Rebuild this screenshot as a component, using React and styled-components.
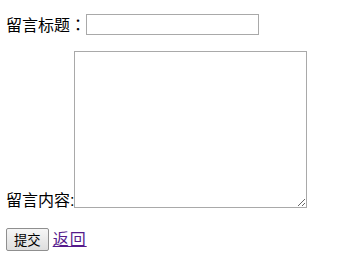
import React from 'react'
import styled, { createGlobalStyle } from 'styled-components'

const GlobalStyle = createGlobalStyle`
  body {
    margin: 0;
    background: #fff;
    color: #000;
    font-family: "Liberation Sans", "Noto Sans CJK SC", sans-serif;
    font-size: 16px;
  }
`

const Form = styled.form`
  padding: 14px 6px 0;
`

const Row = styled.div`
  display: flex;
  align-items: ${props => props.align || 'center'};
  margin-bottom: ${props => props.gap || 0}px;
`

const Label = styled.label`
  line-height: 16px;
  margin-bottom: ${props => props.drop || 0}px;
`

// full-width colon sits centred in its cell, as in the TC face
const Colon = styled.span`
  font-family: "Noto Sans CJK TC", sans-serif;
`

const TitleInput = styled.input`
  box-sizing: border-box;
  width: 173px;
  height: 21px;
  margin: 0;
  border: 1px solid #a9a9a9;
  padding: 1px 2px;
  font: inherit;
  font-size: 13px;
`

const ContentArea = styled.textarea`
  box-sizing: border-box;
  width: 233px;
  height: 157px;
  margin: 0;
  border: 1px solid #a9a9a9;
  padding: 2px;
  font: inherit;
  font-size: 13px;
`

const SubmitButton = styled.button`
  box-sizing: border-box;
  height: 23px;
  padding: 1px 7px;
  margin: 0 4px 0 0;
  border: 1px solid #8f8f8f;
  border-radius: 2px;
  background: linear-gradient(#f6f6f6, #dedede);
  font-family: "Liberation Sans", "Noto Sans CJK SC", sans-serif;
  font-size: 13.33px;
  color: #000;
`

const BackLink = styled.a`
  color: #551a8b;
  text-decoration: underline;
  line-height: 16px;
  letter-spacing: 1px;
`

export default function App() {
  return (
    <>
      <GlobalStyle />
      <Form onSubmit={e => e.preventDefault()}>
        <Row gap={16}>
          <Label>留言标题<Colon>：</Colon></Label>
          <TitleInput type="text" />
        </Row>
        <Row align="flex-end" gap={20}>
          <Label drop={-1}>留言内容:</Label>
          <ContentArea />
        </Row>
        <Row>
          <SubmitButton type="submit">提交</SubmitButton>
          <BackLink href="#">返回</BackLink>
        </Row>
      </Form>
    </>
  )
}
